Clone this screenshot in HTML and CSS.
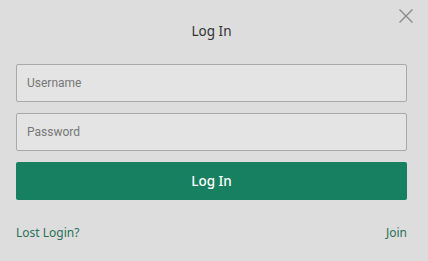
FILE: index.html
```html
<!DOCTYPE html>
<html lang="en">
<head>
  <meta charset="UTF-8" />
  <meta name="viewport" content="width=device-width, initial-scale=1" />
  <title>Log In</title>
  <link rel="stylesheet" href="styles.css">
</head>
<body>
  <div class="login-modal">
    <button class="close-btn" aria-label="Close">
      <svg width="16" height="16" viewBox="0 0 16 16">
        <path d="M1.5 1.5 L14.5 14.5 M14.5 1.5 L1.5 14.5" stroke="#8a8a8a" stroke-width="1.4" fill="none" />
      </svg>
    </button>
    <h2 class="title">Log In</h2>
    <form class="login-form">
      <input type="text" class="field" placeholder="Username" />
      <input type="password" class="field" placeholder="Password" />
      <button type="button" class="submit">Log In</button>
    </form>
    <div class="links">
      <a href="#">Lost Login?</a>
      <a href="#">Join</a>
    </div>
  </div>
</body>
</html>
```

FILE: styles.css
```css
body {
  margin: 0;
  padding: 0;
  background: #dddddd;
  font-family: 'Noto Sans', 'Open Sans', sans-serif;
}
.login-modal {
  position: relative;
  padding: 22px 21px 0 16px;
}
.close-btn {
  position: absolute;
  top: 8px;
  right: 14px;
  border: none;
  background: none;
  padding: 0;
  cursor: pointer;
  line-height: 0;
}
.title {
  margin: 0 0 24px;
  font-size: 13.5px;
  font-weight: normal;
  line-height: 18px;
  text-align: center;
  color: #333;
}
.login-form {
  display: flex;
  flex-direction: column;
  gap: 11px;
}
.field {
  box-sizing: border-box;
  height: 38px;
  margin: 0;
  padding: 0 10px;
  border: 1px solid #a9a9a9;
  border-radius: 2px;
  background: #e4e4e4;
  font-family: Roboto, 'Liberation Sans', sans-serif;
  font-size: 12px;
  color: #333;
}
.field::placeholder {
  color: #777;
}
.submit {
  height: 38px;
  border: none;
  border-radius: 2px;
  background: #168060;
  color: #fff;
  font-family: 'Noto Sans', 'Open Sans', sans-serif;
  font-size: 13.5px;
  font-weight: 500;
  cursor: pointer;
}
.links {
  display: flex;
  justify-content: space-between;
  margin-top: 24px;
  font-size: 12px;
  line-height: 18px;
}
.links a {
  color: #2b7058;
  text-decoration: none;
}
```
